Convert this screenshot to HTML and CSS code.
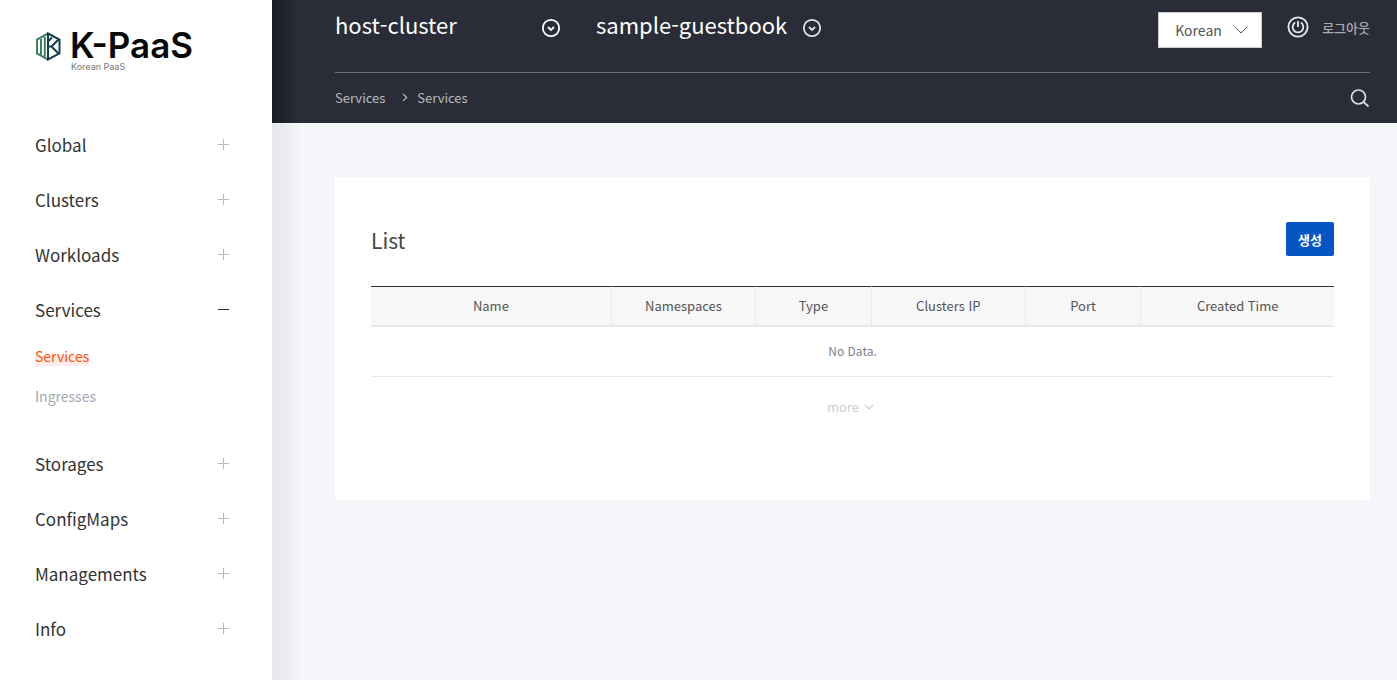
FILE: index.html
```html
<!DOCTYPE html>
<html lang="ko">
<head>
<meta charset="utf-8">
<title>K-PaaS Services</title>
<link rel="stylesheet" href="styles.css">
</head>
<body>
<div class="layout">
  <aside class="sidebar">
    <a class="logo" href="#">
      <svg class="logo-mark" width="26" height="29" viewBox="0 0 26 29" fill="none" stroke-width="2">
        <path d="M13 1.5 2 7.5v14L13 27.5M6 7v15.500M9.800 5v19.500" stroke="#3d8061"/>
        <path d="M13 1.500 24.500 7.500v14L13 27.500z" stroke="#123f50"/>
        <path d="M13 14.500h4M23.500 7.500 16.500 14.500l7 7M13 9.500l4-4" stroke="#123f50"/>
      </svg>
      <span class="logo-text"><span class="logo-name">K-PaaS</span><span class="logo-sub">Korean PaaS</span></span>
    </a>
    <nav>
      <ul class="menu">
        <li><button class="menu-item" type="button">Global<span class="sign plus"></span></button></li>
        <li><button class="menu-item" type="button">Clusters<span class="sign plus"></span></button></li>
        <li><button class="menu-item" type="button">Workloads<span class="sign plus"></span></button></li>
        <li>
          <button class="menu-item" type="button" aria-expanded="true">Services<span class="sign minus"></span></button>
          <ul class="submenu">
            <li><a class="current" href="#">Services</a></li>
            <li><a href="#">Ingresses</a></li>
          </ul>
        </li>
        <li><button class="menu-item" type="button">Storages<span class="sign plus"></span></button></li>
        <li><button class="menu-item" type="button">ConfigMaps<span class="sign plus"></span></button></li>
        <li><button class="menu-item" type="button">Managements<span class="sign plus"></span></button></li>
        <li><button class="menu-item" type="button">Info<span class="sign plus"></span></button></li>
      </ul>
    </nav>
  </aside>
  <div class="main">
    <header class="header">
      <div class="topbar">
        <button class="picker cluster" type="button"><span class="picker-name">host-cluster</span>
          <svg width="20" height="20" viewBox="0 0 20 20" fill="none" stroke="#fff" stroke-width="1.800"><circle cx="10" cy="10" r="8.200"/><path d="m7 9 3 3 3-3"/></svg>
        </button>
        <button class="picker" type="button"><span class="picker-name">sample-guestbook</span>
          <svg width="20" height="20" viewBox="0 0 20 20" fill="none" stroke="#e4e5e7" stroke-width="1.800"><circle cx="10" cy="10" r="8.200"/><path d="m7 9 3 3 3-3"/></svg>
        </button>
        <div class="tools">
          <div class="language">
            <select aria-label="Language"><option>Korean</option><option>English</option></select>
            <svg width="14" height="8" viewBox="0 0 14 8" fill="none" stroke="#555"><path d="m.5.500 6.500 6.500L13.500.500"/></svg>
          </div>
          <a class="logout" href="#">
            <svg width="22" height="22" viewBox="0 0 22 22" fill="none" stroke="#e8e8ea"><circle cx="11" cy="11" r="9.600" stroke-width="1.800"/><path d="M8.200 6.600a5.300 5.300 0 1 0 5.600 0M11 5v6" stroke-width="1.800"/></svg>
            로그아웃
          </a>
        </div>
      </div>
      <div class="pathbar">
        <nav class="breadcrumb">
          <a href="#">Services</a>
          <svg width="6" height="9" viewBox="0 0 6 9" fill="none" stroke="#b9bbc0" stroke-width="1.200"><path d="m1 .8 3.700 3.700L1 8.200"/></svg>
          <a href="#">Services</a>
        </nav>
        <button class="search" type="button" aria-label="Search">
          <svg width="20" height="20" viewBox="0 0 20 20" fill="none" stroke="#dcdde0" stroke-width="1.700"><circle cx="8.500" cy="9" r="7"/><path d="m13.500 14 5 4.500"/></svg>
        </button>
      </div>
    </header>
    <main class="content">
      <section class="card">
        <div class="card-head">
          <h1>List</h1>
          <button class="create" type="button">생성</button>
        </div>
        <table class="list">
          <colgroup><col class="w25"><col class="w15"><col class="w12"><col class="w16"><col class="w12"><col class="w20"></colgroup>
          <thead>
            <tr><th>Name</th><th>Namespaces</th><th>Type</th><th>Clusters IP</th><th>Port</th><th>Created Time</th></tr>
          </thead>
          <tbody><tr><td colspan="6">No Data.</td></tr></tbody>
        </table>
        <button class="more" type="button">more
          <svg width="10" height="6" viewBox="0 0 10 6" fill="none" stroke="#ccc" stroke-width="1.200"><path d="m1 .8 4 4 4-4"/></svg>
        </button>
      </section>
    </main>
  </div>
</div>
</body>
</html>
```
FILE: styles.css
```css
* { box-sizing: border-box; }
body {
  margin: 0;
  background: #fff;
  font-family: "Noto Sans CJK KR", "Noto Sans", sans-serif;
}
button, select { font-family: inherit; }
button { padding: 0; border: 0; background: none; cursor: pointer; }
a { color: inherit; text-decoration: none; }
ul { margin: 0; padding: 0; list-style: none; }
svg { display: block; flex: none; }

.layout { display: flex; min-height: calc(100vh - 3px); }

.sidebar { flex: none; width: 272px; padding: 27px 43px 0 35px; background: #fff; }
.logo { display: flex; gap: 9px; height: 90px; color: #080808; font-family: Inter, sans-serif; }
.logo-mark { margin-top: 5px; }
.logo-text { display: flex; flex-direction: column; }
.logo-name { font-size: 35px; font-weight: 600; line-height: 36px; }
.logo-sub { padding-left: 1px; color: #777; font-size: 9px; line-height: 8px; }

.menu-item {
  display: flex;
  align-items: center;
  justify-content: space-between;
  width: 100%;
  height: 55px;
  color: #333;
  font-size: 17px;
}
.sign {
  width: 11px;
  height: 11px;
  background: linear-gradient(#b3b8c4, #b3b8c4) center / 100% 1px no-repeat;
}
.plus {
  background:
    linear-gradient(#b3b8c4, #b3b8c4) center / 100% 1px no-repeat,
    linear-gradient(#b3b8c4, #b3b8c4) center / 1px 100% no-repeat;
}
.minus { background: linear-gradient(#333, #333) center / 100% 1px no-repeat; }
.submenu { display: grid; gap: 2px; padding-bottom: 21px; color: #a1a8b3; font-size: 14px; line-height: 38px; }
.submenu .current {
  color: #ff5314;
  background: linear-gradient(transparent 50%, #ffece6 50%);
}

.main {
  position: relative;
  flex: 1;
  min-width: 0;
  background: #f5f6fa;
}
.main::before {
  content: "";
  position: absolute;
  inset: 0 auto 0 0;
  width: 30px;
  background: linear-gradient(90deg, rgba(0, 0, 0, .06), rgba(0, 0, 0, .04) 50%, transparent);
}
.header {
  padding: 0 27px 0 63px;
  color: #fff;
  background: linear-gradient(90deg, #1b1e26, #2a2d37 28px);
}
.topbar { display: flex; align-items: flex-start; height: 73px; border-bottom: 1px solid #696b73; }
.picker {
  display: flex;
  align-items: center;
  gap: 15px;
  height: 55px;
  color: #fff;
  font-size: 22px;
}
.picker-name { padding-bottom: 7px; }
.cluster { justify-content: space-between; width: 226px; margin-right: 35px; }
.tools { display: flex; gap: 25px; margin-left: auto; padding-top: 12px; }
.language { position: relative; }
.language select {
  appearance: none;
  width: 104px;
  height: 36px;
  padding: 0 16px;
  border: 1px solid #ccc;
  border-radius: 0;
  background: #fff;
  color: #555;
  font-size: 14px;
}
.language svg { position: absolute; top: 14px; right: 14px; pointer-events: none; }
.logout { display: flex; align-items: center; gap: 13px; height: 30px; color: #aaabaf; font-size: 13px; font-weight: 500; }
.pathbar { display: flex; align-items: center; justify-content: space-between; height: 50px; }
.breadcrumb { display: flex; align-items: center; gap: 9px; padding-bottom: 1px; color: #b9bbc0; font-size: 13px; }
.breadcrumb svg { margin-left: 8px; }

.content { padding: 54px 27px 0 63px; }
.card { min-height: 323px; padding: 45px 36px; background: #fff; box-shadow: 0 0 4px rgba(0, 0, 0, .02); }
.card-head { display: flex; justify-content: space-between; height: 34px; margin-bottom: 30px; }
.card-head h1 { margin: 0; color: #444; font-size: 21px; font-weight: 400; line-height: 36px; }
.create {
  width: 48px;
  height: 34px;
  border-radius: 2px;
  background: #0555c4;
  color: #fff;
  font-size: 13px;
  font-weight: 700;
}
.list { width: 100%; border-collapse: separate; border-spacing: 0; table-layout: fixed; font-size: 13px; }
.list th {
  height: 41px;
  padding: 0 0 2px;
  border-top: 1px solid #333;
  border-bottom: 2px solid #e9e9e9;
  background: #f7f7f7;
  color: #555;
  font-weight: 400;
}
.list th:not(:last-child) { border-right: 1px solid #e9e9e9; }
.list td { height: 50px; padding: 0 0 2px; border-bottom: 1px solid #e9e9e9; color: #7d828c; font-size: 12px; text-align: center; }
.w25 { width: 25%; }
.w20 { width: 20%; }
.w16 { width: 16%; }
.w15 { width: 15%; }
.w12 { width: 12%; }
.more { display: flex; align-items: center; gap: 5px; margin: 20px auto 0; padding-right: 4px; color: #ccc; font-size: 13px; }
```
